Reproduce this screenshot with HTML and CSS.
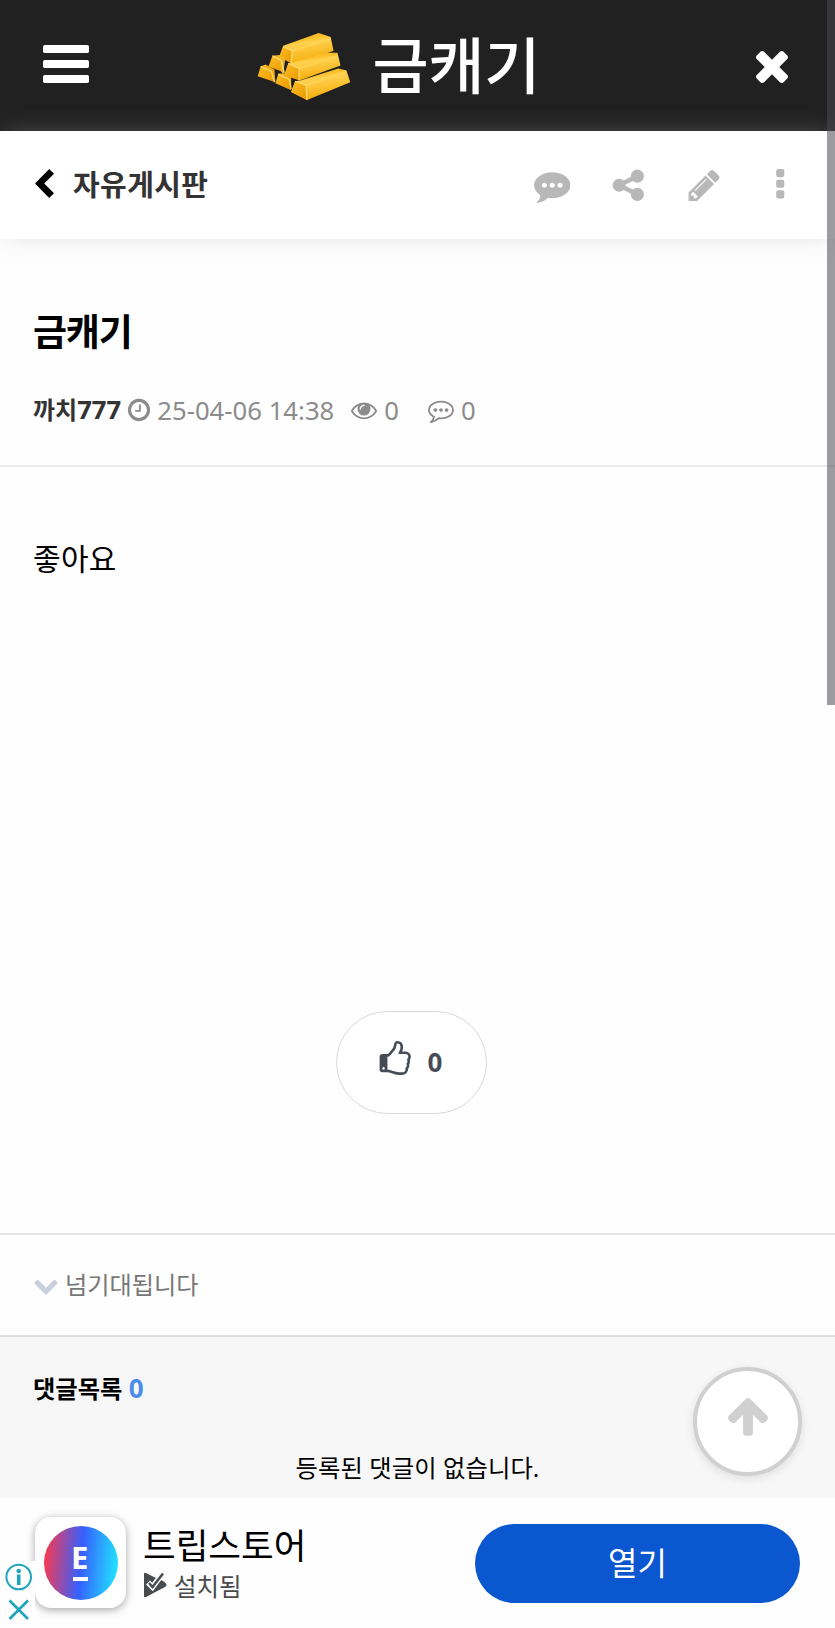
FILE: index.html
```html
<!DOCTYPE html>
<html lang="ko">
<head>
    <meta charset="UTF-8">
    <meta name="viewport" content="width=device-width, initial-scale=1.0">
    <title>금캐기</title>
    <link rel="stylesheet" href="styles.css">
</head>
<body>
    <!-- Header -->
    <header id="header">
        <svg class="menu-icon" viewBox="0 0 46 38"><rect width="46" height="8" rx="1.8"/><rect y="15" width="46" height="8" rx="1.8"/><rect y="30" width="46" height="8" rx="1.8"/></svg>
        <div class="logo">
            <svg class="gold" viewBox="0 0 94 68">
                <defs>
                    <linearGradient id="bar" x1="0" y1="0" x2="0.3" y2="1">
                        <stop offset="0" stop-color="#f9b916"/>
                        <stop offset="0.3" stop-color="#fbc02a"/>
                        <stop offset="0.42" stop-color="#ffd050"/>
                        <stop offset="1" stop-color="#f6ae0b"/>
                    </linearGradient>
                    <linearGradient id="end" x1="0" y1="0" x2="1" y2="1">
                        <stop offset="0" stop-color="#fdbd22"/>
                        <stop offset="1" stop-color="#e99a00"/>
                    </linearGradient>
                </defs>
                <path d="M22 24L26 13 62 0 74 4 77 18 38 32Z" fill="url(#bar)"/>
                <path d="M22 24L26 13 35 18 34 31Z" fill="url(#end)"/>
                <path d="M35 18L74 6" stroke="#ffd450" stroke-width="2"/>
                <path d="M26 14L35 18 34 31" fill="none" stroke="#ffdc78" stroke-width="1.2"/>
                <path d="M11 34L15 23 26 27 27 40Z" fill="url(#end)"/>
                <path d="M15 23L24 22 28 25 26 42 23 38 23 29Z" fill="#f4b31c"/>
                <path d="M15 23L24 28 27 41" fill="none" stroke="#ffe39a" stroke-width="1.2"/>
                <path d="M27 43L31 31 70 20 81 20 84 33 43 48Z" fill="url(#bar)"/>
                <path d="M27 43L31 31 42 36 42 48Z" fill="url(#end)"/>
                <path d="M42 36L81 23" stroke="#ffd450" stroke-width="2"/>
                <path d="M31 31L42 36 42 48" fill="none" stroke="#ffdc78" stroke-width="1.2"/>
                <path d="M0 44L3 34 8 32 17 37 18 50Z" fill="url(#end)"/>
                <path d="M3 34L14 39 17 50" fill="none" stroke="#ffdc78" stroke-width="1.2"/>
                <path d="M18 51L21 41 27 41 34 45 34 58Z" fill="url(#end)"/>
                <path d="M21 42L32 47 34 57" fill="none" stroke="#ffdc78" stroke-width="1.2"/>
                <path d="M34 60L38 49 44 48 82 36 90 38 94 50 50 68Z" fill="url(#bar)"/>
                <path d="M34 60L38 49 49 53 50 68Z" fill="url(#end)"/>
                <path d="M49 53L90 39" stroke="#ffd450" stroke-width="2"/>
                <path d="M38 49L49 53 50 68" fill="none" stroke="#ffdc78" stroke-width="1.2"/>
            </svg>
            <span class="logo-text">금캐기</span>
        </div>
        <svg class="close-icon" viewBox="302 366 1188 1188"><path d="M1490 1322q0 40-28 68l-136 136q-28 28-68 28t-68-28l-294-294-294 294q-28 28-68 28t-68-28l-136-136q-28-28-28-68t28-68l294-294-294-294q-28-28-28-68t28-68l136-136q28-28 68-28t68 28l294 294 294-294q28-28 68-28t68 28l136 136q28 28 28 68t-28 68l-294 294 294 294q28 28 28 68z"/></svg>
    </header>

    <!-- Board bar -->
    <nav id="board-bar">
        <svg class="back-icon" viewBox="0 0 19 29"><path d="M14.2 0L19 4.8 9.2 14.5 19 24.2 14.2 29 0 14.5Z"/></svg>
        <span class="board-name">자유게시판</span>
        <div class="board-tools">
            <svg viewBox="0 0 1792 1792"><path d="M640 896q0-53-37.500-90.500t-90.500-37.500-90.500 37.500-37.500 90.500 37.500 90.500 90.500 37.500 90.500-37.500 37.500-90.500zm384 0q0-53-37.500-90.500t-90.500-37.500-90.500 37.500-37.500 90.500 37.500 90.500 90.500 37.500 90.500-37.500 37.500-90.500zm384 0q0-53-37.500-90.500t-90.500-37.500-90.500 37.500-37.500 90.500 37.500 90.500 90.500 37.500 90.500-37.500 37.500-90.500zm384 0q0 174-120 321.500t-326 233-450 85.500q-110 0-211-18-173 173-435 229-52 10-86 13-12 1-22-6t-13-18q-4-15 20-37 5-5 23.500-21.500t25.500-23.500 23.500-25.500 24-31.500 20.500-37 20-48 14.500-57.500 12.500-72.500q-146-90-229.500-216.500t-83.500-269.500q0-174 120-321.500t326-233 450-85.500 450 85.500 326 233 120 321.500z"/></svg>
            <svg viewBox="0 0 1792 1792"><path d="M1344 1024q133 0 226.500 93.500t93.500 226.500-93.500 226.500-226.500 93.500-226.500-93.500-93.500-226.500q0-12 2-34l-360-180q-92 86-218 86-133 0-226.500-93.500t-93.500-226.500 93.500-226.500 226.500-93.500q126 0 218 86l360-180q-2-22-2-34 0-133 93.500-226.500t226.500-93.500 226.500 93.500 93.500 226.500-93.500 226.500-226.500 93.500q-126 0-218-86l-360 180q2 22 2 34t-2 34l360 180q92-86 218-86z"/></svg>
            <svg viewBox="0 0 1792 1792"><path d="M491 1536l91-91-235-235-91 91v107h128v128h107zm523-928q0-22-22-22-10 0-17 7l-542 542q-7 7-7 17 0 22 22 22 10 0 17-7l542-542q7-7 7-17zm-54-192l416 416-832 832h-416v-416zm683 96q0 53-37 90l-166 166-416-416 166-165q36-38 90-38 53 0 91 38l235 234q37 39 37 91z"/></svg>
            <svg viewBox="0 0 36 36"><rect x="14" y="2" width="8" height="8" rx="2"/><rect x="14" y="12.500" width="8" height="8" rx="2"/><rect x="14" y="23" width="8" height="8" rx="2"/></svg>
        </div>
    </nav>

    <!-- Post title and info -->
    <section id="post-head">
        <h1>금캐기</h1>
        <div class="post-info">
            <strong><span class="ko">까치</span>777</strong>
            <svg class="clock" viewBox="0 0 1792 1792"><path d="M1024 544v448q0 14-9 23t-23 9h-320q-14 0-23-9t-9-23v-64q0-14 9-23t23-9h224v-352q0-14 9-23t23-9h64q14 0 23 9t9 23zm416 352q0-148-73-273t-198-198-273-73-273 73-198 198-73 273 73 273 198 198 273 73 273-73 198-198 73-273zm224 0q0 209-103 385.500t-279.500 279.500-385.500 103-385.500-103-279.500-279.500-103-385.500 103-385.500 279.500-279.500 385.500-103 385.500 103 279.500 279.500 103 385.500z"/></svg>
            <span class="date">25-04-06 14:38</span>
            <svg class="eye" viewBox="0 0 1792 1792"><path d="M1664 960q-152-236-381-353 61 104 61 225 0 185-131.500 316.500t-316.500 131.500-316.500-131.500-131.500-316.500q0-121 61-225-229 117-381 353 133 205 333.500 326.500t434.500 121.500 434.500-121.500 333.500-326.500zm-720-384q0-20-14-34t-34-14q-125 0-214.500 89.500t-89.500 214.500q0 20 14 34t34 14 34-14 14-34q0-86 61-147t147-61q20 0 34-14t14-34zm848 384q0 34-20 69-140 230-376.500 368.500t-499.500 138.500-499.500-139-376.500-368q-20-35-20-69t20-69q140-229 376.500-368t499.500-139 499.500 139 376.500 368q20 35 20 69z"/></svg>
            <span class="hits">0</span>
            <svg class="talk" viewBox="0 0 1792 1792"><path d="M640 896q0 53-37.500 90.500t-90.500 37.500-90.500-37.500-37.500-90.500 37.500-90.500 90.500-37.500 90.500 37.500 37.500 90.500zm384 0q0 53-37.500 90.500t-90.500 37.500-90.500-37.500-37.500-90.500 37.500-90.500 90.500-37.500 90.500 37.500 37.500 90.500zm384 0q0 53-37.500 90.500t-90.500 37.500-90.500-37.500-37.500-90.500 37.500-90.500 90.500-37.500 90.500 37.500 37.500 90.500zm-512-512q-204 0-381.500 69.500t-282 187.500-104.500 255q0 112 71.500 213.500t201.500 175.500l87 50-27 96q-24 91-70 172 152-63 275-171l43-38 57 6q69 8 130 8 204 0 381.500-69.500t282-187.500 104.500-255-104.500-255-282-187.500-381.500-69.500zm896 512q0 174-120 321.500t-326 233-450 85.500q-70 0-145-8-198 175-460 242-49 14-114 22h-5q-15 0-27-10.500t-16-27.500v-1q-3-4-.5-12t2-10 4.500-9.500l6-9 7-8.500 8-9q7-8 31-34.500t34.500-38 31-39.500 32.500-51 27-59 26-76q-157-89-247.500-220t-90.500-281q0-174 120-321.500t326-233 450-85.500 450 85.500 326 233 120 321.500z"/></svg>
            <span>0</span>
        </div>
    </section>

    <!-- Post body -->
    <main id="post-body">
        <p>좋아요</p>
        <button class="like-button">
            <svg viewBox="0 0 1792 1792"><path d="M384 1344q0-26-19-45t-45-19-45 19-19 45 19 45 45 19 45-19 19-45zm1152-576q0-51-39-89.500t-89-38.500h-352q0-58 48-159.500t48-160.500q0-98-32-145t-128-47q-26 26-38 85t-30.500 125.500-59.500 109.500q-22 23-77 91-4 5-23 30t-31.500 41-34.500 42.500-40 44-38.500 35.500-40 27-35.500 9h-32v640h32q13 0 31.500 3t33 6.500 38 11 35 11.500 35.500 12.500 29 10.500q211 73 342 73h121q192 0 192-167 0-26-5-56 30-16 47.500-52.500t17.500-73.500-18-69q53-50 53-119 0-25-10-55.500t-25-47.500q32-1 53.500-47t21.500-81zm128-1q0 89-49 163 9 33 9 69 0 77-38 144 3 21 3 43 0 101-60 178 1 139-85 219.500t-227 80.500h-129q-96 0-189.500-22.500t-216.500-65.500q-116-40-138-40h-288q-53 0-90.500-37.500t-37.500-90.500v-640q0-53 37.500-90.500t90.500-37.500h274q36-24 137-155 58-75 107-128 24-25 35.500-85.500t30.500-126.500 62-108q39-37 90-37 84 0 151 32.500t102 101.500 35 186q0 93-48 192h176q104 0 180 76t76 179z"/></svg>
            <span>0</span>
        </button>
    </main>

    <!-- Next post -->
    <div id="next-post">
        <svg viewBox="0 0 1792 1792"><path d="M1683 808l-742 741q-19 19-45 19t-45-19l-742-741q-19-19-19-45.500t19-45.500l166-165q19-19 45-19t45 19l531 531 531-531q19-19 45-19t45 19l166 165q19 19 19 45.500t-19 45.500z"/></svg>
        <span>넘기대됩니다</span>
    </div>

    <!-- Comments -->
    <section id="comments">
        <h2>댓글목록 <span>0</span></h2>
        <p>등록된 댓글이 없습니다.</p>
        <div class="top-button">
            <svg viewBox="0 0 1792 1792"><path d="M1675 971q0 51-37 90l-75 75q-38 38-91 38-54 0-90-38l-294-293v704q0 52-37.500 84.500t-90.500 32.500h-128q-53 0-90.500-32.500t-37.500-84.500v-704l-294 293q-36 38-90 38t-90-38l-75-75q-38-38-38-90 0-53 38-91l651-651q35-37 90-37 54 0 91 37l651 651q37 39 37 91z"/></svg>
        </div>
    </section>

    <!-- Bottom ad -->
    <footer id="ad">
        <div class="app-icon"><div class="app-circle"><span>E</span></div></div>
        <div class="ad-text">
            <div class="ad-name">트립스토어</div>
            <div class="ad-state">
                <svg viewBox="0 0 24 26"><path d="M1 2Q1 0 3 1L12 5.500 16 7 20 9 22 10.500Q25 13 22 15L3 25Q1 26 1 24Z"/><path d="M5 10.500L9.500 15 20 1" fill="none" stroke="#fefefe" stroke-width="5.500"/><path d="M6 11L9.500 15 20 1.500" fill="none" stroke="#4a4b4d" stroke-width="2.500"/></svg>
                <span>설치됨</span>
            </div>
        </div>
        <div class="ad-open">열기</div>
        <div class="ad-choices">
            <svg viewBox="0 0 35 66"><circle cx="18.700" cy="16" r="12.300"/><path d="M18.700 13.500V24" stroke-width="3.600"/><circle class="dot" cx="18.700" cy="10" r="2.300"/><path d="M9.500 39.500L28 58M28 39.500L9.500 58" stroke-width="2.700"/></svg>
        </div>
    </footer>

    <div id="scroll-thumb"></div>
</body>
</html>
```
FILE: styles.css
```css
* {
    box-sizing: border-box;
}

body {
    position: relative;
    margin: 0;
    height: 1628px;
    overflow: hidden;
    background-color: #fefefe;
    color: #000;
    font-family: "Noto Sans", "Noto Sans CJK KR", sans-serif;
    font-size: 25.7px;
}

svg {
    display: block;
    flex: none;
    fill: currentColor;
}

h1, h2, p {
    margin: 0;
}

/* Header */
#header {
    display: flex;
    height: 130.5px;
    padding: 0 47px 0 43px;
    background-color: #212121;
    color: #fff;
}

.menu-icon {
    width: 46px;
    height: 38px;
    margin-top: 45px;
}

.logo {
    display: flex;
    margin: 0 auto 0 167.5px;
}

.gold {
    width: 94px;
    height: 67px;
    margin-top: 33px;
}

.logo-text {
    margin: 18px 0 0 22px;
    font-family: "Noto Sans CJK KR", sans-serif;
    font-size: 61px;
    font-weight: 500;
    line-height: 90px;
    letter-spacing: -0.3px;
}

.close-icon {
    width: 32px;
    height: 32px;
    margin-top: 51px;
}

/* Board bar */
#board-bar {
    position: relative;
    display: flex;
    align-items: center;
    height: 108.5px;
    padding: 0 37px 0 35px;
    background-color: #fff;
    box-shadow: 0 0 24px -4px rgba(170, 170, 170, 0.42);
}

.back-icon {
    width: 19px;
    height: 29px;
    margin-top: -3px;
}

.board-name {
    margin: -4px 0 0 19px;
    color: #333;
    font-size: 29px;
    font-weight: bold;
    letter-spacing: 0.4px;
}

.board-tools {
    display: flex;
    gap: 39.5px;
    margin-left: auto;
    color: #b8b8b8;
}

.board-tools svg {
    width: 36.5px;
    height: 36.5px;
}

/* Post title and info */
#post-head {
    height: 228px;
    padding: 66px 33px 0;
    border-bottom: 2px solid #ebebeb;
}

#post-head h1 {
    font-size: 37px;
    font-weight: bold;
    line-height: 53px;
    letter-spacing: -1.2px;
}

.post-info {
    display: flex;
    align-items: center;
    height: 40px;
    margin-top: 32px;
    color: #8c8c8c;
}

.post-info strong {
    color: #333;
    line-height: 36px;
    letter-spacing: 0;
}

.post-info .ko {
    font-size: 24px;
}

.post-info svg {
    width: 26px;
    height: 26px;
}

.clock {
    margin: 0 5px 0 5px;
}

.eye {
    margin: 0 7px 0 17px;
}

.talk {
    margin: 0 7px 0 29px;
}

/* Post body */
#post-body {
    height: 768px;
    padding: 68px 33px 0;
    border-bottom: 2px solid #e3e5e8;
}

#post-body p {
    font-size: 30px;
    line-height: 48px;
    letter-spacing: 0.3px;
}

.like-button {
    display: flex;
    align-items: center;
    width: 151px;
    height: 103px;
    margin: 428px 0 0 303px;
    padding: 0 0 0 40px;
    border: 1.5px solid #d9d9d9;
    border-radius: 52px;
    background-color: #fff;
    color: #464c56;
    font-family: inherit;
    font-size: 26px;
    font-weight: bold;
}

.like-button svg {
    width: 36.5px;
    height: 36.5px;
    margin: -7px 14px 0 0;
}

.like-button span {
    margin-top: -2px;
}

/* Next post */
#next-post {
    display: flex;
    align-items: center;
    height: 102px;
    padding-left: 33px;
    border-bottom: 2px solid #dfe0e2;
    color: #777;
    font-size: 24.2px;
}

#next-post svg {
    width: 26px;
    height: 26px;
    margin-right: 6px;
    color: #c8d0de;
}

#next-post span {
    margin-top: -4px;
}

/* Comments */
#comments {
    position: relative;
    height: 161px;
    padding-top: 31px;
    background-color: #f7f7f7;
    font-size: 24.3px;
}

#comments h2 {
    padding-left: 33px;
    font-size: inherit;
    line-height: 40px;
}

#comments h2 span {
    color: #4a8bee;
    font-size: 26px;
}

#comments p {
    margin-top: 39px;
    line-height: 40px;
    letter-spacing: 0.1px;
    text-align: center;
}

.top-button {
    position: absolute;
    top: 30px;
    right: 33px;
    width: 109px;
    height: 109px;
    padding: 22px 0 0 27.5px;
    border: 4px solid #d0d0d0;
    border-radius: 50%;
    background-color: #fff;
    box-shadow: 0 3px 10px rgba(0, 0, 0, 0.1);
    color: #d0d0d0;
}

.top-button svg {
    width: 46px;
    height: 46px;
}

/* Bottom ad */
#ad {
    position: relative;
    display: flex;
    height: 130px;
    background-color: #fefefe;
    font-family: "Noto Sans CJK KR", sans-serif;
}

.app-icon {
    width: 91px;
    height: 91px;
    margin: 19px 0 0 35px;
    padding: 8.5px;
    border-radius: 16px;
    background-color: #fff;
    box-shadow: 0 2px 8px rgba(0, 0, 0, 0.35);
}

.app-circle {
    height: 74px;
    padding: 20px 0 0 29.5px;
    border-radius: 50%;
    background: linear-gradient(95deg, #f23b56 5%, #3560ff 50%, #2f8bff 65%, #22e0ff 95%);
}

.app-circle span {
    display: block;
    width: 14.5px;
    height: 35.5px;
    border-bottom: 4.5px solid #fff;
    color: #fff;
    font-family: "Open Sans", sans-serif;
    font-size: 31px;
    font-weight: bold;
    line-height: 22px;
    text-indent: -2px;
}

.ad-text {
    margin: 23px 0 0 17px;
}

.ad-name {
    font-size: 35.5px;
    line-height: 46px;
}

.ad-state {
    display: flex;
    align-items: center;
    height: 36px;
    color: #4a4b4d;
    font-size: 24.5px;
}

.ad-state svg {
    width: 24px;
    height: 26px;
    margin-right: 7px;
}

.ad-open {
    width: 325px;
    height: 79px;
    margin: 26px 35px 0 auto;
    border-radius: 40px;
    background-color: #0b57d0;
    color: #fff;
    font-size: 32px;
    line-height: 75px;
    text-align: center;
}

.ad-choices {
    position: absolute;
    left: 0;
    bottom: 0;
    width: 35px;
    height: 67px;
    background-color: #fefefe;
}

.ad-choices svg {
    width: 35px;
    height: 66px;
    fill: none;
    stroke: #1ea5bd;
    stroke-width: 2;
}

.ad-choices .dot {
    fill: #1ea5bd;
    stroke: none;
}

/* Scroll indicator over the page */
#scroll-thumb {
    position: absolute;
    top: 0;
    right: 0;
    width: 8.5px;
    height: 704.5px;
    background-color: rgba(75, 72, 80, 0.55);
}
```
